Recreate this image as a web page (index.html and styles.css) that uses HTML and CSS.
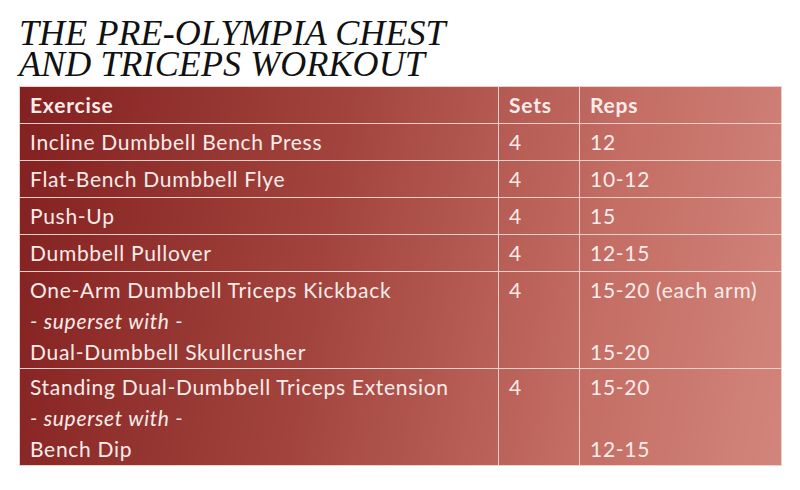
FILE: index.html
```html
<!DOCTYPE html>
<html>
<head>
<meta charset="utf-8">
<link rel="stylesheet" href="styles.css">
</head>
<body>
<div class="page">
  <h1 class="title">THE PRE-OLYMPIA CHEST<br>AND TRICEPS WORKOUT</h1>
  <table class="workout">
    <colgroup>
      <col class="c-ex"><col class="c-sets"><col class="c-reps">
    </colgroup>
    <thead>
      <tr><th>Exercise</th><th>Sets</th><th>Reps</th></tr>
    </thead>
    <tbody>
      <tr><td>Incline Dumbbell Bench Press</td><td>4</td><td>12</td></tr>
      <tr><td>Flat-Bench Dumbbell Flye</td><td>4</td><td>10-12</td></tr>
      <tr><td>Push-Up</td><td>4</td><td>15</td></tr>
      <tr><td>Dumbbell Pullover</td><td>4</td><td>12-15</td></tr>
      <tr class="multi"><td>One-Arm Dumbbell Triceps Kickback<br><em>- superset with -</em><br>Dual-Dumbbell Skullcrusher</td><td>4</td><td>15-20 (each arm)<br>&nbsp;<br>15-20</td></tr>
      <tr class="multi"><td>Standing Dual-Dumbbell Triceps Extension<br><em>- superset with -</em><br>Bench Dip</td><td>4</td><td>15-20<br>&nbsp;<br>12-15</td></tr>
    </tbody>
  </table>
</div>
</body>
</html>
```
FILE: styles.css
```css
html, body { margin: 0; padding: 0; background: #ffffff; }
.page { padding: 18px 19px 0 19px; width: 762px; }
.title {
  margin: 0 0 6px 0;
  font-family: "Liberation Serif", "DejaVu Serif", serif;
  font-style: italic;
  font-weight: normal;
  font-size: 36px;
  line-height: 31px;
  letter-spacing: 0.1px;
  color: #111;
}
.workout {
  width: 762px;
  border-collapse: collapse;
  table-layout: fixed;
  background: linear-gradient(100deg, #832020 0%, #a2443d 40%, #c46e65 75%, #d2857c 100%);
  font-family: "Lato", "Liberation Sans", sans-serif;
  font-size: 21px;
  letter-spacing: 0.7px;
  color: #fbecea;
}
.c-ex { width: 479px; }
.c-sets { width: 81px; }
.c-reps { width: 202px; }
.workout th, .workout td {
  border: 1.5px solid #efcfca;
  text-align: left;
  vertical-align: top;
  padding: 3px 10px 3px 10px;
  line-height: 30px;
}
.workout th { font-weight: 700; font-size: 21px; letter-spacing: 0.8px; }
.workout td em { font-style: italic; }
.workout tr.multi td { line-height: 31px; padding-top: 2px; padding-bottom: 1px; }
```
